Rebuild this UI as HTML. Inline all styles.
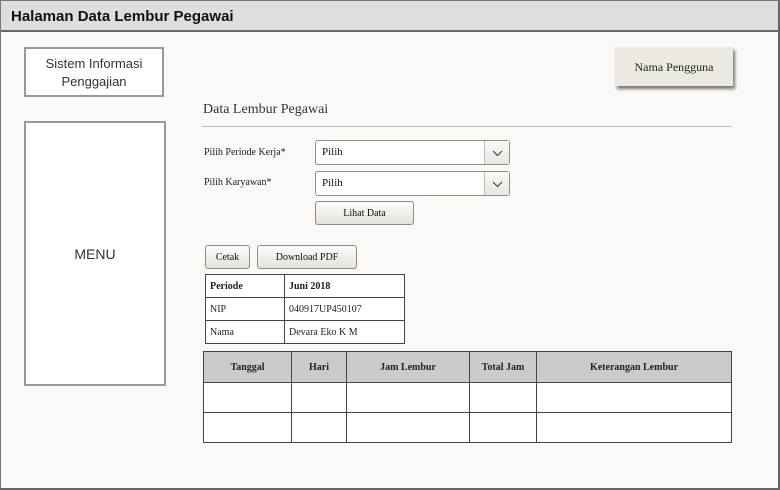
<!DOCTYPE html>
<html><head><style>
*{margin:0;padding:0;box-sizing:border-box}
body{width:780px;height:490px;background:#fff;position:relative;overflow:hidden;font-family:"Liberation Serif",serif;color:#222}
.a{position:absolute}
.frame{left:0;top:0;width:780px;height:490px;border:1px solid #777;border-right:2px solid #666;border-bottom:2px solid #666;background:#f9f9f9}
.hdr{left:1px;top:1px;width:777px;height:31px;background:#dedede;border-bottom:2px solid #666;font:bold 15px "Liberation Sans",sans-serif;color:#111;padding:7px 0 0 10px}
.box{background:#fff;border:2px solid #999;font-family:"Liberation Sans",sans-serif;color:#333;text-align:center}
.sel{background:#fff;border:1px solid #9a8a7a;border-radius:3px;font-size:11px;padding:5px 0 0 6px;color:#111}
.sel .ar{position:absolute;right:0;top:0;width:25px;height:100%;border-left:1px solid #bbb;background:linear-gradient(#fafafa,#e8e6e0)}
.btn{border:1px solid #9a8a7a;border-radius:3px;background:linear-gradient(#fcfcfc,#e4e2dc);font-size:11px;text-align:center;color:#111}
table{border-collapse:collapse;font-size:11px}
td,th{border:1px solid #444}
</style></head><body>
<div class="a frame"></div>
<div class="a hdr">Halaman Data Lembur Pegawai</div>
<div class="a box" style="left:24px;top:47px;width:140px;height:50px;font-size:13px;line-height:18px;padding-top:6px">Sistem Informasi<br>Penggajian</div>
<div class="a box" style="left:24px;top:121px;width:142px;height:265px;font-size:14px;line-height:262px">MENU</div>
<div class="a" style="left:615px;top:47px;width:118px;height:39px;background:#ece9e2;box-shadow:2px 3px 3px #777;font-size:12px;text-align:center;line-height:40px">Nama Pengguna</div>
<div class="a" style="left:203px;top:102px;font-size:14px;color:#333">Data Lembur Pegawai</div>
<div class="a" style="left:202px;top:126px;width:530px;height:1px;background:#bbb"></div>
<div class="a" style="left:204px;top:147px;font-size:10px">Pilih Periode Kerja*</div>
<div class="a" style="left:204px;top:177px;font-size:10px">Pilih Karyawan*</div>
<div class="a sel" style="left:315px;top:140px;width:195px;height:25px">Pilih<div class="ar"><svg width="25" height="23"><path d="M8 10l4.5 4.5L17 10" fill="none" stroke="#333" stroke-width="1"/></svg></div></div>
<div class="a sel" style="left:315px;top:171px;width:195px;height:25px">Pilih<div class="ar"><svg width="25" height="23"><path d="M8 10l4.5 4.5L17 10" fill="none" stroke="#333" stroke-width="1"/></svg></div></div>
<div class="a btn" style="left:315px;top:201px;width:99px;height:24px;line-height:23px;font-size:10px">Lihat Data</div>
<div class="a btn" style="left:205px;top:245px;width:45px;height:24px;line-height:23px;font-size:10px">Cetak</div>
<div class="a btn" style="left:257px;top:245px;width:100px;height:24px;line-height:23px;font-size:10px">Download PDF</div>
<table class="a" style="left:205px;top:274px;width:200px;background:#fff;font-size:10px">
<tr style="height:23px"><td style="width:79px;padding-left:4px;font-weight:bold">Periode</td><td style="padding-left:4px;font-weight:bold">Juni 2018</td></tr>
<tr style="height:23px"><td style="padding-left:4px">NIP</td><td style="padding-left:4px">040917UP450107</td></tr>
<tr style="height:23px"><td style="padding-left:4px">Nama</td><td style="padding-left:4px">Devara Eko K M</td></tr>
</table>
<table class="a" style="left:203px;top:351px;width:529px;background:#fff;font-size:10px">
<tr style="height:31px;background:#cbcbcb"><th style="width:88px">Tanggal</th><th style="width:55px">Hari</th><th style="width:123px">Jam Lembur</th><th style="width:67px">Total Jam</th><th>Keterangan Lembur</th></tr>
<tr style="height:30px"><td></td><td></td><td></td><td></td><td></td></tr>
<tr style="height:30px"><td></td><td></td><td></td><td></td><td></td></tr>
</table>
</body></html>
